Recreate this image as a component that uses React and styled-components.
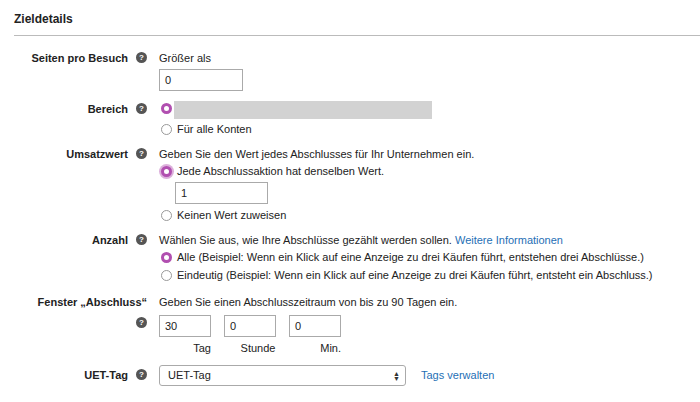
import React from 'react'
import styled, { createGlobalStyle } from 'styled-components'

const Global = createGlobalStyle`
  body { margin: 0; background: #fff; font-family: "Liberation Sans", Arial, sans-serif; font-size: 11px; color: #222; }
`

const Page = styled.div`
  padding: 12px 0 0 14px;
`

const Title = styled.div`
  font-weight: bold;
  font-size: 12px;
  padding-bottom: 9px;
  border-bottom: 1px solid #bbb;
`

const Form = styled.div`
  padding-top: 9px;
  display: flex;
  flex-direction: column;
`

const Row = styled.div`
  display: grid;
  grid-template-columns: 145px 1fr;
  margin-top: ${p => p.$mt || 0}px;
`

const LabelCell = styled.div`
  display: flex;
  flex-direction: ${p => (p.$stack ? 'column' : 'row')};
  justify-content: ${p => (p.$stack ? 'flex-start' : 'flex-end')};
  align-items: ${p => (p.$stack ? 'flex-end' : 'flex-start')};
  gap: 8px;
  padding-right: ${p => (p.$stack ? 0 : 12)}px;
  padding-top: ${p => p.$pt || 0}px;
  font-weight: bold;
  line-height: 13px;
`

const Help = styled.span`
  width: 11px;
  height: 11px;
  border-radius: 50%;
  background: #555;
  color: #fff;
  font-size: 8px;
  font-weight: bold;
  display: inline-flex;
  align-items: center;
  justify-content: center;
  margin-right: ${p => (p.$stack ? 12 : 0)}px;
  flex-shrink: 0;
`

const Content = styled.div`
  display: flex;
  flex-direction: column;
  line-height: 13px;
`

const TextInput = styled.div`
  width: ${p => p.$w}px;
  height: 22px;
  box-sizing: border-box;
  border: 1px solid #aaa;
  padding: 4px 5px;
  margin: ${p => p.$m || '0'};
  font-size: 11px;
`

const RadioLine = styled.label`
  display: flex;
  align-items: center;
  gap: 5px;
  margin-top: ${p => p.$mt || 0}px;
`

const Radio = styled.span`
  width: 11px;
  height: 11px;
  border-radius: 50%;
  box-sizing: border-box;
  flex-shrink: 0;
  border: ${p => (p.$on ? '3.5px solid #b14fb0' : '1px solid #999')};
  background: #fff;
  box-shadow: ${p => (p.$glow ? '0 0 0 2px rgba(177,79,176,0.45)' : 'none')};
  margin-left: 2px;
`

const Redacted = styled.div`
  width: 258px;
  height: 18px;
  background: #d2d2d2;
  margin-top: -13px;
`

const Link = styled.a`
  color: #1f6fb5;
  text-decoration: none;
`

const WindowInputs = styled.div`
  display: flex;
  gap: 13px;
  margin-top: 6px;
`

const Unit = styled.div`
  width: 52px;
  display: flex;
  flex-direction: column;
  align-items: ${p => p.$align};
  gap: 5px;
`

const SelectRow = styled.div`
  display: flex;
  align-items: center;
  gap: 15px;
`

const Select = styled.div`
  width: 247px;
  height: 21px;
  box-sizing: border-box;
  border: 1px solid #aaa;
  border-radius: 3px;
  display: flex;
  align-items: center;
  justify-content: space-between;
  padding: 0 5px 0 8px;
`

const Arrows = styled.span`
  font-size: 7px;
  line-height: 5px;
  display: flex;
  flex-direction: column;
  color: #333;
`

export default function App() {
  return (
    <Page>
      <Global />
      <Title>Zieldetails</Title>
      <Form>
        <Row $mt={7}>
          <LabelCell>Seiten pro Besuch<Help>?</Help></LabelCell>
          <Content>
            Größer als
            <TextInput $w={84} $m="4px 0 0">0</TextInput>
          </Content>
        </Row>
        <Row $mt={12}>
          <LabelCell>Bereich<Help>?</Help></LabelCell>
          <Content>
            <RadioLine><Radio $on /><span /></RadioLine>
            <div style={{ paddingLeft: 15 }}><Redacted /></div>
            <RadioLine $mt={4}><Radio />Für alle Konten</RadioLine>
          </Content>
        </Row>
        <Row $mt={12}>
          <LabelCell>Umsatzwert<Help>?</Help></LabelCell>
          <Content>
            Geben Sie den Wert jedes Abschlusses für Ihr Unternehmen ein.
            <RadioLine $mt={4}><Radio $on $glow />Jede Abschlussaktion hat denselben Wert.</RadioLine>
            <TextInput $w={93} $m="4px 0 0 16px">1</TextInput>
            <RadioLine $mt={5}><Radio />Keinen Wert zuweisen</RadioLine>
          </Content>
        </Row>
        <Row $mt={12}>
          <LabelCell>Anzahl<Help>?</Help></LabelCell>
          <Content>
            <span>Wählen Sie aus, wie Ihre Abschlüsse gezählt werden sollen. <Link>Weitere Informationen</Link></span>
            <RadioLine $mt={4}><Radio $on />Alle (Beispiel: Wenn ein Klick auf eine Anzeige zu drei Käufen führt, entstehen drei Abschlüsse.)</RadioLine>
            <RadioLine $mt={5}><Radio />Eindeutig (Beispiel: Wenn ein Klick auf eine Anzeige zu drei Käufen führt, entsteht ein Abschluss.)</RadioLine>
          </Content>
        </Row>
        <Row $mt={14}>
          <LabelCell $stack>
            <span style={{ paddingRight: 12 }}>Fenster „Abschluss“</span>
            <Help $stack>?</Help>
          </LabelCell>
          <Content>
            Geben Sie einen Abschlusszeitraum von bis zu 90 Tagen ein.
            <WindowInputs>
              <Unit $align="flex-end"><TextInput $w={52}>30</TextInput><span style={{ paddingRight: 0 }}>Tag</span></Unit>
              <Unit $align="center"><TextInput $w={52}>0</TextInput><span style={{ paddingLeft: 16 }}>Stunde</span></Unit>
              <Unit $align="flex-end"><TextInput $w={52}>0</TextInput><span style={{ paddingRight: 0 }}>Min.</span></Unit>
            </WindowInputs>
          </Content>
        </Row>
        <Row $mt={10}>
          <LabelCell $pt={4}>UET-Tag<Help>?</Help></LabelCell>
          <Content>
            <SelectRow>
              <Select>UET-Tag<Arrows><span>▲</span><span>▼</span></Arrows></Select>
              <Link>Tags verwalten</Link>
            </SelectRow>
          </Content>
        </Row>
      </Form>
    </Page>
  )
}
